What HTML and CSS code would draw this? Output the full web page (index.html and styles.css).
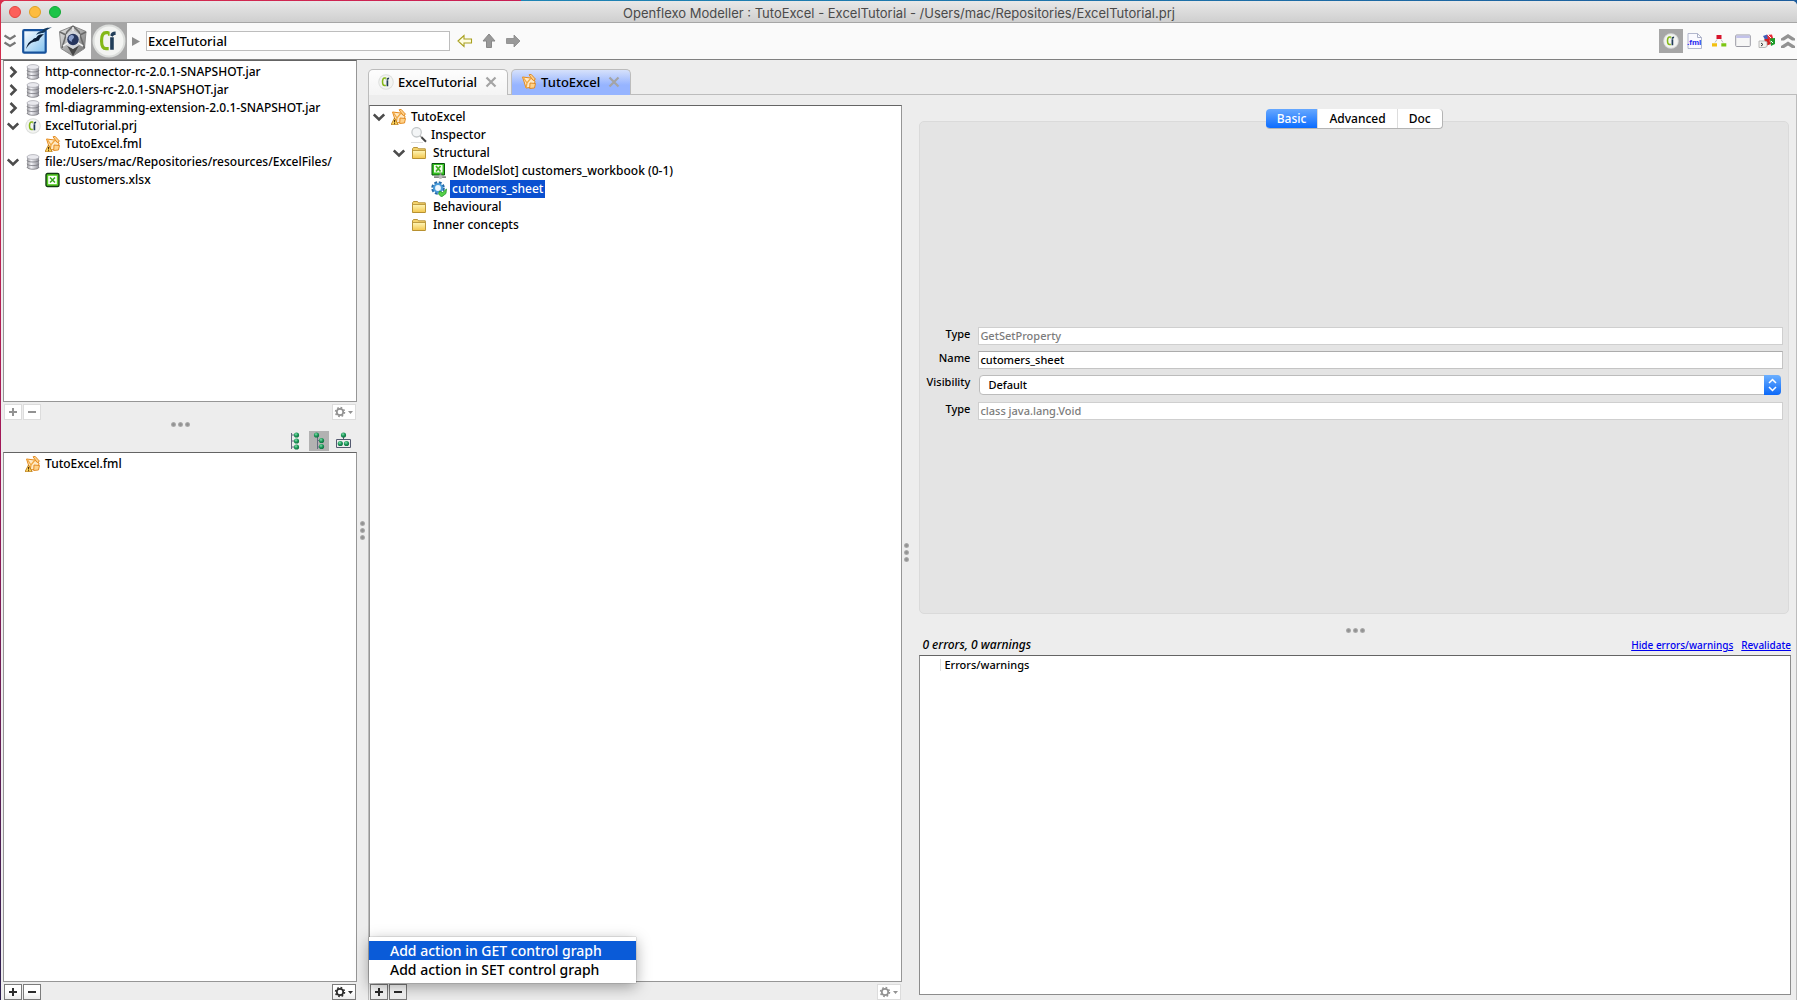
FILE: index.html
```html
<!DOCTYPE html>
<html lang="en">
<head>
<meta charset="utf-8">
<title>Openflexo Modeller</title>
<link rel="stylesheet" href="styles.css">
</head>
<body>
<svg class="defs" aria-hidden="true">
  <defs>
    <linearGradient id="g-metal" x1="0" x2="1" y1="0" y2="0"><stop offset="0" stop-color="#9a9a9e"/><stop offset=".35" stop-color="#f4f4f8"/><stop offset="1" stop-color="#8c8c94"/></linearGradient>
    <linearGradient id="g-folder" x1="0" x2="0" y1="0" y2="1"><stop offset="0" stop-color="#fff6b8"/><stop offset="1" stop-color="#f2c64c"/></linearGradient>
    <linearGradient id="g-blue" x1="0" x2="1" y1="0" y2="1"><stop offset="0" stop-color="#ffffff"/><stop offset="1" stop-color="#7fc0ee"/></linearGradient>
    <radialGradient id="g-ball" cx=".4" cy=".35" r=".7"><stop offset="0" stop-color="#7fe0a8"/><stop offset=".5" stop-color="#1f9a5c"/><stop offset="1" stop-color="#0c6a3c"/></radialGradient>
    <linearGradient id="g-steel" x1="0" x2="1" y1="0" y2="1"><stop offset="0" stop-color="#e8e8e8"/><stop offset="1" stop-color="#6e6e6e"/></linearGradient>
  </defs>
  <symbol id="right" viewBox="0 0 12 12"><path d="M3.500 1l5 5-5 5" fill="none" stroke="#4c4c4c" stroke-width="2.600"/></symbol>
  <symbol id="down" viewBox="0 0 12 12"><path d="M.8 3.500l5.200 5 5.200-5" fill="none" stroke="#4c4c4c" stroke-width="2.600"/></symbol>
  <symbol id="db" viewBox="0 0 16 16">
    <path d="M2 3v10c0 3 12 3 12 0V3z" fill="url(#g-metal)"/>
    <path d="M2 6.200c0 2.400 12 2.400 12 0M2 9.800c0 2.400 12 2.400 12 0M2 13c0 3 12 3 12 0" fill="none" stroke="#77777f" stroke-width=".8"/>
    <ellipse cx="8" cy="3" rx="6" ry="2.400" fill="#e9e9ee" stroke="#a4a4ac" stroke-width=".7"/>
  </symbol>
  <symbol id="ci" viewBox="0 0 32 32">
    <circle cx="16" cy="16" r="15.500" fill="#dcdedc"/><circle cx="16" cy="16" r="13.600" fill="#f3f4f2"/>
    <path d="M15.500 8.200h-2.300c-3.200 0-4.200 3-4.200 7.500s1.200 7.500 4.200 7.500h2.500" fill="none" stroke="#84b818" stroke-width="3"/><path d="M15.800 7v4" stroke="#84b818" stroke-width="1.600"/>
    <path d="M18.800 12.500v11.800" fill="none" stroke="#213d58" stroke-width="3.400"/><path d="M17.200 10.800c.4-2.400 2-3.800 5-3.800v3.400c-1.600 0-2.200.6-2.600 1.600z" fill="#213d58"/>
  </symbol>
  <symbol id="fmlnet" viewBox="0 0 16 16">
    <path d="M1.500 3l8 1 4.500 3-1 6-8 1-1.500-5z" fill="#ffe9c4" stroke="#e48a1c" stroke-width="1"/>
    <path d="M2 3l4 6 4-5M6 9l-1 5" fill="none" stroke="#f0a844" stroke-width="1.300"/>
    <path d="M8 .8l2.200-.4 4.300 4.800-2.300 1.300zM9 9l5.500.5-1 4.500-4.800.5z" fill="#ffd28a" stroke="#e08418" stroke-width=".9"/>
  </symbol>
  <symbol id="fmlwarn" viewBox="0 0 16 16">
    <use href="#fmlnet"/><path d="M3.500 9L7.200 15.800H0z" fill="#ffd65c" stroke="#b0700c" stroke-width=".8"/><path d="M3.600 11v2.500M3.600 14.200v1" stroke="#402000" stroke-width="1"/>
  </symbol>
  <symbol id="xls" viewBox="0 0 16 16">
    <rect x="1" y="1.500" width="13" height="13" rx="1.500" fill="#54cc22" stroke="#123c12" stroke-width="1.400"/><rect x="3.200" y="3.800" width="8.600" height="8.400" fill="#fff"/>
    <path d="M5 5.500l5 5M10 5.500l-5 5" stroke="#36a81c" stroke-width="1.600"/>
  </symbol>
  <symbol id="slot" viewBox="0 0 16 16">
    <path d="M1 .5h12.500v11.500H1z" fill="#35c020" stroke="#0a5010"/><path d="M3 2h8.500v7.500H3z" fill="#f4ffee"/><path d="M5 3l4.500 5.500M9.500 3L5 8.500" stroke="#40b022" stroke-width="1.700"/>
    <path d="M9.500 10v4M3 14.200h12" stroke="#888" stroke-width="1.800"/><circle cx="9.500" cy="14" r="1.900" fill="#bbb"/>
  </symbol>
  <symbol id="glass" viewBox="0 0 16 16">
    <circle cx="5.600" cy="5.300" r="4.700" fill="#f3f5f6" stroke="#c4c8ca" stroke-width="1.300"/><path d="M9 8.800l2 1.800" stroke="#aaa" stroke-width="1.500"/><path d="M10.500 10.200l4.500 4.600" stroke="#444" stroke-width="2"/><path d="M0 15.500h12" stroke="#ddd"/>
  </symbol>
  <symbol id="folder" viewBox="0 0 16 16">
    <path d="M1.500 13.500V3.800l1-1.300h4l1 1.300h6.800v9.700z" fill="#f4d36c" stroke="#b08a2c" stroke-width=".9"/><path d="M1.500 5.500h13v7.200l-.6.800H2l-.5-.8z" fill="url(#g-folder)" stroke="#b08a2c" stroke-width=".8"/>
  </symbol>
  <symbol id="gear" viewBox="0 0 16 16">
    <circle cx="7" cy="7" r="5.200" fill="none" stroke="#256aa8" stroke-width="3.200" stroke-dasharray="2.600 1.500"/><circle cx="7" cy="7" r="4" fill="#eef7ff" stroke="#4a9cda" stroke-width="2.200"/>
    <path d="M8.500 10l3 1.500 4-3.500-.5 4.500-4.500 3.500-3-3z" fill="#55d048" stroke="#1c8c28" stroke-width=".7"/>
  </symbol>
  <symbol id="cross" viewBox="0 0 12 12"><path d="M1.500 1.500l9 9M10.500 1.500l-9 9" stroke="currentColor" stroke-width="2.200"/></symbol>
  <symbol id="cog" viewBox="0 0 20 12">
    <circle cx="6" cy="6" r="3.200" fill="none" stroke="currentColor" stroke-width="1.700"/><circle cx="6" cy="6" r="4.500" fill="none" stroke="currentColor" stroke-width="1.500" stroke-dasharray="1.700 1.834"/>
    <path d="M14 5h5l-2.500 3z" fill="currentColor"/>
  </symbol>
  <symbol id="plus" viewBox="0 0 10 10"><path d="M1 5h8M5 1v8" stroke="currentColor" stroke-width="2"/></symbol>
  <symbol id="minus" viewBox="0 0 10 10"><path d="M1 5h8" stroke="currentColor" stroke-width="2"/></symbol>
</svg>

<div class="window">
  <header class="titlebar">
    <div class="lights"><span class="light red"></span><span class="light amber"></span><span class="light green"></span></div>
    <h1 class="title">Openflexo Modeller : TutoExcel - ExcelTutorial - /Users/mac/Repositories/ExcelTutorial.prj</h1>
  </header>

  <div class="toolbar">
    <button class="tool t-fold" aria-label="Collapse"><svg width="14" height="16" viewBox="0 0 14 16"><path d="M1.500 2.500L7 6l5.500-3.500M1.500 9.500L7 13l5.500-3.500" fill="none" stroke="#777" stroke-width="2.200"/></svg></button>
    <button class="tool t-office" aria-label="Office">
      <svg width="32" height="30" viewBox="0 0 32 30"><rect x="2.200" y="4.200" width="22.500" height="22.500" rx="1" fill="url(#g-blue)" stroke="#17529c" stroke-width="2.200"/><path d="M5 23c1-5 3.500-8 6.500-9 1-1.500 2-2 3.500-2 2-3.500 5-4 8-3.500-2 1-3 2.500-4.500 4.500 0 1-1 2-2.500 2-1.500 1-2.500.5-3.500 1-3 .5-5 3-7.500 7z" fill="#0a1c34"/><path d="M15 9c2-3 3.500-4 6-4C23 2 26 1.500 31 1.500c-3 1-5 2-6.500 4-1 1.500-2.500 1.500-4 1.500-2 .5-3.500 1-5.500 2z" fill="#12385e"/></svg>
    </button>
    <button class="tool t-shield" aria-label="Infrastructure">
      <svg width="30" height="32" viewBox="0 0 30 32"><path d="M15 1l13 5.500-1.500 17L15 31 3 23.500 1.500 6.500z" fill="url(#g-steel)" stroke="#888"/><path d="M9 20.500L15 31l6-10.500L15 24z" fill="#484848"/><path d="M2 7l6 3-4 13M28 7l-6 3 4.500 13M15 1L9 7l-1 3M15 1l6 6 1 3" fill="none" stroke="#6a6a6a" stroke-width="1.600"/><path d="M15 5l7 4.500-1.500 11L15 24l-6-3.500L8 9.500z" fill="#d3d5da"/><circle cx="15" cy="14.500" r="5.800" fill="#27365e"/><path d="M11 12c2-3 5-2 5 0s-3 2-2 5c-3-1-4-3-3-5z" fill="#8ca0cc"/><path d="M15 2v4M5 21l5-3M25 21l-5-3" stroke="#eee" stroke-width="1.500"/></svg>
    </button>
    <button class="tool t-ci selected" aria-label="Modeller"><svg width="34" height="34"><use href="#ci"/></svg></button>
    <svg class="play" width="8" height="9" viewBox="0 0 8 9"><path d="M0 0l8 4.500L0 9z" fill="#8c8c8c"/></svg>
    <input class="location" type="text" value="ExcelTutorial" aria-label="Location">
    <button class="tool t-nav" aria-label="Back"><svg width="16" height="14" viewBox="0 0 16 14"><path d="M1 7l6-5.500V5h7.500v4H7v3.500z" fill="#fffde0" stroke="#a8a020" stroke-width="1.100"/></svg></button>
    <button class="tool t-nav" aria-label="Up"><svg width="14" height="16" viewBox="0 0 14 16"><path d="M7 1l6 7H9.500v6.500h-5V8H1z" fill="#999" stroke="#888"/></svg></button>
    <button class="tool t-nav" aria-label="Forward"><svg width="16" height="14" viewBox="0 0 16 14"><path d="M15 7L9 1v3.500H1.500v5H9V13z" fill="#999" stroke="#888" stroke-width=".8"/></svg></button>
    <div class="perspectives">
      <button class="persp selected" aria-label="Modelling"><svg width="16" height="16"><use href="#ci"/></svg></button>
      <button class="persp" aria-label="FML text"><svg width="16" height="16" viewBox="0 0 16 16"><path d="M1 .5h9.500l4 4v11H1z" fill="#fafaff" stroke="#aab0c8" stroke-width=".9"/><path d="M10.500.5v4h4" fill="none" stroke="#aab0c8"/><text x="0" y="12" class="fml-text">.fml</text></svg></button>
      <button class="persp" aria-label="Diagram"><svg width="16" height="16" viewBox="0 0 16 16"><path d="M6 6.500L4 9.500M10 6.500l2 3" fill="none" stroke="#bbb"/><path d="M5.500 2h5v4h-5z" fill="#d8142c"/><path d="M1 10.200h5v3.300H1z" fill="#f2c010"/><path d="M10.300 10.200h5v3.300h-5z" fill="#7cc614"/></svg></button>
      <button class="persp" aria-label="Interface"><svg width="16" height="16" viewBox="0 0 16 16"><rect x=".7" y="2" width="14.600" height="11.500" rx="1" fill="#f6f6f6" stroke="#9a9aa4"/><path d="M1.200 2.500h13.600V5H1.200z" fill="#c2c2ea"/></svg></button>
      <button class="persp" aria-label="Locales"><svg width="18" height="16" viewBox="0 0 18 16"><path d="M5 3l4-1.500 3 5-4 2z" fill="#4060b8"/><path d="M9 2l5-.5 1.500 5-5 1.500z" fill="#e82c38"/><path d="M12 5.500l5-.5v6l-4 2z" fill="#1c9c28"/><path d="M6 6.500l4.500-1 2.500 5.500-4 1.500z" fill="#d02020"/><path d="M10 2l3 3M13 8l2 2" stroke="#fff"/><path d="M1 8h6l2 1v4.500l-2 1H1z" fill="#f2f2ee" stroke="#aaa" stroke-width=".8"/><path d="M3 10l2 1.500-2 1.500" fill="none" stroke="#333"/></svg></button>
      <button class="tool t-up" aria-label="Hide toolbar"><svg width="16" height="16" viewBox="0 0 16 16"><path d="M1 7.500V5.500L8 1l7 4.500v2H12L8 5 4 7.500zM1 15v-2l7-4.500 7 4.500v2h-3l-4-2.500L4 15z" fill="#929292"/></svg></button>
    </div>
  </div>

  <main class="workspace">
    <aside class="sidebar">
      <ul class="tree resources">
        <li class="row"><svg class="tw"><use href="#right"/></svg><svg class="ic"><use href="#db"/></svg><span>http-connector-rc-2.0.1-SNAPSHOT.jar</span></li>
        <li class="row"><svg class="tw"><use href="#right"/></svg><svg class="ic"><use href="#db"/></svg><span>modelers-rc-2.0.1-SNAPSHOT.jar</span></li>
        <li class="row"><svg class="tw"><use href="#right"/></svg><svg class="ic"><use href="#db"/></svg><span>fml-diagramming-extension-2.0.1-SNAPSHOT.jar</span></li>
        <li class="row"><svg class="tw"><use href="#down"/></svg><svg class="ic"><use href="#ci"/></svg><span>ExcelTutorial.prj</span></li>
        <li class="row leaf level-2"><svg class="ic"><use href="#fmlwarn"/></svg><span>TutoExcel.fml</span></li>
        <li class="row"><svg class="tw"><use href="#down"/></svg><svg class="ic"><use href="#db"/></svg><span>file:/Users/mac/Repositories/resources/ExcelFiles/</span></li>
        <li class="row leaf level-2"><svg class="ic"><use href="#xls"/></svg><span>customers.xlsx</span></li>
      </ul>
      <div class="actions">
        <button class="act" aria-label="Add" disabled><svg width="10" height="10"><use href="#plus"/></svg></button>
        <button class="act" aria-label="Remove" disabled><svg width="10" height="10"><use href="#minus"/></svg></button>
        <button class="act act-menu" aria-label="Options" disabled><svg width="20" height="12"><use href="#cog"/></svg></button>
      </div>
      <div class="grip horizontal"><i></i><i></i><i></i></div>
      <div class="modes">
        <button class="mode" aria-label="Flat"><svg width="20" height="20" viewBox="0 0 20 20"><path d="M6.500 2v16M6.500 4h4M6.500 10h4M6.500 16h4" fill="none" stroke="#666a80"/><g fill="url(#g-ball)"><circle cx="11.500" cy="4" r="2.600"/><circle cx="11.500" cy="10" r="2.600"/><circle cx="11.500" cy="16" r="2.600"/></g></svg></button>
        <button class="mode selected" aria-label="Hierarchical"><svg width="20" height="20" viewBox="0 0 20 20"><path d="M8.500 5v13M8.500 9.500h4M8.500 16h4" fill="none" stroke="#666a80"/><g fill="url(#g-ball)"><circle cx="7.500" cy="4" r="2.600"/><circle cx="12.500" cy="9.500" r="2.600"/><circle cx="12.500" cy="15.500" r="2.600"/></g></svg></button>
        <button class="mode" aria-label="Container"><svg width="20" height="20" viewBox="0 0 20 20"><path d="M10.500 5v3M3.500 8.500h14v8h-14z" fill="none" stroke="#555a70"/><g fill="url(#g-ball)"><circle cx="10.500" cy="4" r="2.600"/><circle cx="7.300" cy="12.500" r="2.600"/><circle cx="13.500" cy="12.500" r="2.600"/></g></svg></button>
      </div>
      <ul class="tree contents">
        <li class="row leaf"><svg class="ic"><use href="#fmlwarn"/></svg><span>TutoExcel.fml</span></li>
      </ul>
      <div class="actions">
        <button class="act" aria-label="Add"><svg width="10" height="10"><use href="#plus"/></svg></button>
        <button class="act" aria-label="Remove"><svg width="10" height="10"><use href="#minus"/></svg></button>
        <button class="act act-menu" aria-label="Options"><svg width="20" height="12"><use href="#cog"/></svg></button>
      </div>
    </aside>

    <div class="grip vertical split-main"><i></i><i></i><i></i></div>

    <section class="editor">
      <nav class="tabs">
        <button class="tab"><svg class="ic"><use href="#ci"/></svg><span>ExcelTutorial</span><svg class="close"><use href="#cross"/></svg></button>
        <button class="tab active"><svg class="ic"><use href="#fmlnet"/></svg><span>TutoExcel</span><svg class="close"><use href="#cross"/></svg></button>
      </nav>
      <div class="editor-body">
        <div class="outline">
          <ul class="tree outline-tree">
            <li class="row"><svg class="tw"><use href="#down"/></svg><svg class="ic"><use href="#fmlwarn"/></svg><span>TutoExcel</span></li>
            <li class="row leaf level-2"><svg class="ic"><use href="#glass"/></svg><span>Inspector</span></li>
            <li class="row level-2"><svg class="tw"><use href="#down"/></svg><svg class="ic wide"><use href="#folder"/></svg><span>Structural</span></li>
            <li class="row leaf level-3"><svg class="ic wide"><use href="#slot"/></svg><span>[ModelSlot] customers_workbook (0-1)</span></li>
            <li class="row leaf level-3"><svg class="ic wide"><use href="#gear"/></svg><span class="picked">cutomers_sheet</span></li>
            <li class="row leaf level-2"><svg class="ic wide"><use href="#folder"/></svg><span>Behavioural</span></li>
            <li class="row leaf level-2"><svg class="ic wide"><use href="#folder"/></svg><span>Inner concepts</span></li>
          </ul>
          <div class="actions">
            <button class="act" aria-label="Add"><svg width="10" height="10"><use href="#plus"/></svg></button>
            <button class="act" aria-label="Remove"><svg width="10" height="10"><use href="#minus"/></svg></button>
            <button class="act act-menu" aria-label="Options" disabled><svg width="20" height="12"><use href="#cog"/></svg></button>
            <div class="popup" role="menu">
              <button class="popup-item current" role="menuitem">Add action in GET control graph</button>
              <button class="popup-item" role="menuitem">Add action in SET control graph</button>
            </div>
          </div>
        </div>
        <div class="grip vertical split-editor"><i></i><i></i><i></i></div>
        <div class="details">
          <div class="segments">
            <button class="segment on">Basic</button>
            <button class="segment">Advanced</button>
            <button class="segment">Doc</button>
          </div>
          <form class="inspector">
            <label for="kind">Type</label><input id="kind" type="text" value="GetSetProperty" disabled>
            <label for="name">Name</label><input id="name" type="text" value="cutomers_sheet">
            <label for="visibility">Visibility</label>
            <div class="combo">
              <select id="visibility"><option>Default</option></select>
              <svg class="combo-arrows" width="17" height="20" viewBox="0 0 17 20"><path d="M5 8l3.500-3.500L12 8M5 12l3.500 3.500L12 12" fill="none" stroke="#fff" stroke-width="1.500"/></svg>
            </div>
            <label for="java-type">Type</label><input id="java-type" type="text" value="class java.lang.Void" disabled>
          </form>
          <div class="grip horizontal split-details"><i></i><i></i><i></i></div>
          <div class="validation-head">
            <span class="summary">0 errors, 0 warnings</span>
            <a href="#hide">Hide errors/warnings</a>
            <a href="#revalidate">Revalidate</a>
          </div>
          <div class="issues"><span class="issues-title">Errors/warnings</span></div>
        </div>
      </div>
    </section>
  </main>
</div>
</body>
</html>
```
FILE: styles.css
```css
* { box-sizing: border-box; }

body {
  margin: 0;
  height: 100vh;
  padding: 1px 0 0 1px;
  overflow: hidden;
  font-family: "Noto Sans", "Open Sans", sans-serif;
  font-size: 12px;
  font-weight: 500;
  line-height: 18px;
  color: #000;
  background:
    linear-gradient(90deg, #d8304c 0, #c81e54 29%, #1e84b4 29%, #1c5c9c 100%) top / 100% 6px no-repeat,
    linear-gradient(#d8304c, #a01858 45%, #2c2050);
}

.defs { position: absolute; width: 0; height: 0; }

button, input, select { font: inherit; color: inherit; margin: 0; }
button { padding: 0; border: 0; background: none; }
svg { display: block; flex: none; }
ul { list-style: none; margin: 0; }

.window {
  display: flex;
  flex-direction: column;
  height: 100%;
  background: #ededed;
  border-radius: 5px 5px 0 0;
  overflow: hidden;
}

/* Title bar */
.titlebar {
  position: relative;
  flex: none;
  height: 22px;
  display: flex;
  align-items: center;
  justify-content: center;
  padding-top: 2px;
  background: linear-gradient(#e8e8e8, #cfcfcf);
  border-bottom: 1px solid #a6a6a6;
}
.lights { position: absolute; left: 8px; display: flex; gap: 8px; top: 5px; }
.light { width: 12px; height: 12px; border-radius: 50%; }
.red { background: #fc605b; border: 1px solid #e2463f; }
.amber { background: #fdbc40; border: 1px solid #dfa023; }
.green { background: #1cc448; border: 1px solid #14a836; }
.title {
  margin: 0;
  font-family: Inter, sans-serif;
  font-size: 13px;
  font-weight: 400;
  color: #4a4a4a;
}

/* Toolbar */
.toolbar {
  flex: none;
  height: 37px;
  display: flex;
  align-items: center;
  background: #fafafa;
  border-bottom: 1px solid #808080;
}
.tool { display: flex; align-items: center; justify-content: center; height: 36px; flex: none; }
.t-fold { width: 18px; }
.t-office { width: 36px; }
.t-shield { width: 36px; }
.t-ci { width: 36px; }
.selected { background: #a6a6a6; }
.play { margin: 0 6px 0 5px; }
.location {
  width: 304px;
  height: 20px;
  padding: 0 1px;
  border: 1px solid #bdbdbd;
  background: #fff;
  font-size: 13px;
  margin-right: 3px;
}
.t-nav { width: 24px; }
.perspectives { margin-left: auto; display: flex; align-items: center; }
.persp { width: 24px; height: 24px; display: flex; align-items: center; justify-content: center; }
.t-up { width: 18px; }
.fml-text { font: 700 8px "Liberation Sans", sans-serif; fill: #2222f0; }

/* Split panes */
.workspace { flex: 1; min-height: 0; display: flex; }
.sidebar { width: 354px; flex: none; display: flex; flex-direction: column; margin-left: 2px; }
.grip { display: flex; align-items: center; justify-content: center; gap: 2px; flex: none; }
.grip i { width: 5px; height: 5px; border-radius: 50%; background: radial-gradient(#909090 20%, #c4c4c4 100%); }
.horizontal { height: 10px; }
.vertical { flex-direction: column; width: 11px; }

/* Trees */
.tree {
  flex: 1 1 0;
  min-height: 0;
  background: #fff;
  border: 1px solid #969696;
  border-top-color: #646464;
  padding: 2px 0 0 3px;
  overflow: hidden;
  white-space: nowrap;
}
.resources { flex-grow: 341; }
.contents { flex-grow: 531; }
.row { display: flex; align-items: center; height: 18px; gap: 4px; }
.tw { width: 12px; height: 12px; margin-right: 2px; }
.ic { width: 16px; height: 16px; }
.wide { margin-right: 2px; }
.leaf { padding-left: 18px; }
.level-2 { padding-left: 20px; }
.leaf.level-2 { padding-left: 38px; }
.leaf.level-3 { padding-left: 58px; }
.picked { background: #0a50d0; color: #fff; padding: 0 2px; margin-left: -3px; }

/* Footer buttons of a tree */
.actions { position: relative; flex: none; display: flex; gap: 1px; padding: 2px 1px 0; height: 18px; }
.act {
  width: 18px;
  height: 16px;
  display: flex;
  align-items: center;
  justify-content: center;
  border: 1px solid #7c7c7c;
  background: linear-gradient(#fff 50%, #ececec);
  color: #2c2c2c;
}
.act:disabled { border-color: #dcdcdc; background: #fff; color: #929292; }
.act-menu { width: 24px; margin-left: auto; }

.modes { display: flex; justify-content: flex-end; gap: 4px; height: 22px; padding: 1px 4px 0 0; flex: none; }
.mode { width: 20px; height: 20px; }
.mode.selected { background: #b2b2b2; }

/* Editor */
.editor { flex: 1; min-width: 0; display: flex; flex-direction: column; padding-top: 9px; }
.tabs { display: flex; gap: 3px; height: 26px; flex: none; border-bottom: 1px solid #bcbcbc; font-size: 13px; }
.tab {
  display: flex;
  align-items: center;
  height: 26px;
  padding: 0 10px 2px 9px;
  gap: 4px;
  border: 1px solid #bcbcbc;
  border-bottom: 0;
  border-radius: 5px 5px 0 0;
  background: linear-gradient(#fdfdfd, #f4f4f4);
}
.tab.active { background: linear-gradient(#d6e1fb, #96b4ff 60%); }
.tab .close { width: 12px; height: 12px; margin-left: 4px; color: #a4a4a4; }
.editor-body {
  flex: 1;
  min-height: 0;
  display: flex;
  border: solid #bcbcbc;
  border-width: 0 1px;
  padding: 10px 5px 0 0;
}
.outline { flex: 533 1 0; min-width: 0; display: flex; flex-direction: column; }
.split-editor { width: 17px; align-items: flex-start; padding-left: 2px; }

/* Context menu */
.popup {
  position: absolute;
  left: 0;
  bottom: 17px;
  width: 267px;
  padding: 4px 0;
  background: #fff;
  box-shadow: 0 4px 14px rgba(0, 0, 0, .35), 0 0 1px rgba(0, 0, 0, .5);
}
.popup-item { display: block; width: 100%; height: 19px; padding: 0 21px; text-align: left; font-size: 14px; line-height: 19px; }
.current { background: #0a5bd8; color: #fff; }

/* Property inspector */
.details { flex: 871 1 0; min-width: 0; display: flex; flex-direction: column; padding-bottom: 5px; }
.segments {
  display: flex;
  align-self: center;
  flex: none;
  height: 20px;
  margin: 4px 0 -8px -2px;
  z-index: 1;
  border: solid #b4b4b4;
  border-width: 0 1px 1px 0;
  border-radius: 4px;
  overflow: hidden;
  background: #fff;
}
.segment { padding: 0 11px; border-left: 1px solid #ddd; }
.segment.on { background: linear-gradient(#66a8ff, #0b6cff); color: #fff; border: 0; }
.inspector {
  flex: 478 1 0;
  margin-right: 2px;
  padding: 12px 5px 0 4px;
  display: grid;
  grid-template-columns: 46px 1fr;
  column-gap: 8px;
  row-gap: 6px;
  align-content: center;
  align-items: start;
  background: #e4e4e4;
  border: 1px solid #dadada;
  border-radius: 5px;
  font-size: 11px;
}
.inspector label { text-align: right; line-height: 14px; white-space: nowrap; }
.inspector input { width: 100%; height: 18px; padding: 0 1px; border: 1px solid #c4c4c4; border-top-color: #acacac; background: #fff; }
.inspector input:disabled { color: #7c7c7c; border-color: #cfcfcf; }
.combo { position: relative; height: 20px; margin: 0 2px 1px 1px; }
.combo select { appearance: none; width: 100%; height: 20px; border: 1px solid #bcbcbc; border-radius: 4px; background: #fff; padding: 0 20px 0 8px; }
.combo-arrows { position: absolute; right: 0; top: 0; background: linear-gradient(#6cb0ff, #0b68f8); border-radius: 0 4px 4px 0; pointer-events: none; }

.split-details { height: 24px; padding-top: 8px; }
.validation-head { display: flex; align-items: flex-start; gap: 8px; height: 17px; padding-left: 3px; line-height: 14px; flex: none; }
.validation-head a { color: #0000f0; font-size: 10px; }
.summary { font-style: italic; margin-right: auto; }
.issues { flex: 337 1 0; background: #fff; border: 1px solid #8c8c8c; border-top-color: #646464; padding: 0 0 0 20px; font-size: 11px; }
.issues-title { display: inline-block; border-left: 1px solid #e0e0e0; padding-left: 3px; line-height: 12px; }
```
